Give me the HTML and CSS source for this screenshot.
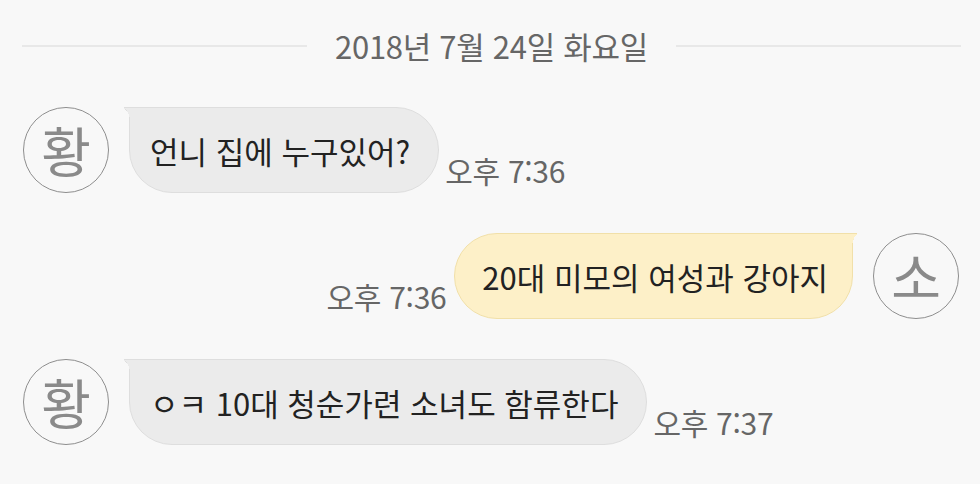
FILE: index.html
```html
<!DOCTYPE html>
<html lang="ko">
<head>
    <meta charset="UTF-8">
    <meta name="viewport" content="width=device-width, initial-scale=1.0">
    <title>채팅</title>
    <link rel="stylesheet" href="styles.css">
</head>
<body>
    <div class="chat">
        <!-- Date divider -->
        <div class="date-row">
            <span class="date-line"></span>
            <span class="date-text">2018년 7월 24일 화요일</span>
            <span class="date-line"></span>
        </div>

        <!-- Messages -->
        <div class="messages">
            <div class="msg in">
                <div class="avatar">황</div>
                <div class="bubble">언니 집에 누구있어?</div>
                <span class="time">오후 7:36</span>
            </div>

            <div class="msg out">
                <span class="time">오후 7:36</span>
                <div class="bubble">20대 미모의 여성과 강아지</div>
                <div class="avatar">소</div>
            </div>

            <div class="msg in">
                <div class="avatar">황</div>
                <div class="bubble">ㅇㅋ 10대 청순가련 소녀도 함류한다</div>
                <span class="time">오후 7:37</span>
            </div>
        </div>
    </div>
</body>
</html>
```

FILE: styles.css
```css
* { margin: 0; padding: 0; box-sizing: border-box; }
body { background: #f8f8f8; font-family: "Noto Sans CJK KR", "Noto Sans", sans-serif; color: #222; width: 980px; height: 484px; overflow: hidden; }

/* Container */
.chat { padding: 26px 21px 0 23px; }

/* Date divider */
.date-row { display: flex; align-items: center; gap: 28px; height: 40px; margin-left: -1px; margin-right: -2px; }
.date-line { flex: 1; height: 2px; background: #e8e8e8; }
.date-text { font-size: 31px; color: #666; letter-spacing: -0.3px; line-height: 40px; }

/* Messages */
.messages { display: flex; flex-direction: column; gap: 40px; margin-top: 41px; }
.msg { display: flex; align-items: flex-start; }
.msg.out { justify-content: flex-end; }

.avatar { width: 86px; height: 86px; border-radius: 50%; border: 1.5px solid #8e8e8e; color: #8a8a8a; font-size: 54px; display: flex; align-items: center; justify-content: center; flex-shrink: 0; line-height: 1; }

.bubble { position: relative; height: 86px; display: flex; align-items: center; font-size: 31px; white-space: nowrap; border-radius: 43px; }
.msg.in .bubble { background: #ebebeb; border: 1px solid #dedede; border-top-left-radius: 0; margin-left: 20px; padding: 0 28px 0 20px; }
.msg.out .bubble { background: #fdf0c8; border: 1px solid #f1e0a9; border-top-right-radius: 0; margin-right: 20px; padding: 0 24px 0 27px; }

/* bubble tails */
.msg.in .bubble::before { content: ""; position: absolute; left: -6px; top: -1px; width: 6px; height: 15px; border-top: 1px solid #dedede; background: radial-gradient(ellipse 6px 14px at 0 100%, transparent 97%, #dedede 98%, #dedede 100%, #ebebeb 100%); }
.msg.out .bubble::before { content: ""; position: absolute; right: -5px; top: -1px; width: 5px; height: 15px; border-top: 1px solid #f1e0a9; background: radial-gradient(ellipse 5px 14px at 100% 100%, transparent 97%, #f1e0a9 98%, #f1e0a9 100%, #fdf0c8 100%); }

.time { align-self: flex-end; font-size: 30px; color: #666; letter-spacing: -0.3px; margin-bottom: 1px; white-space: nowrap; }
.msg.in .time { margin-left: 6px; }
.msg.out .time { margin-right: 8px; }
```
